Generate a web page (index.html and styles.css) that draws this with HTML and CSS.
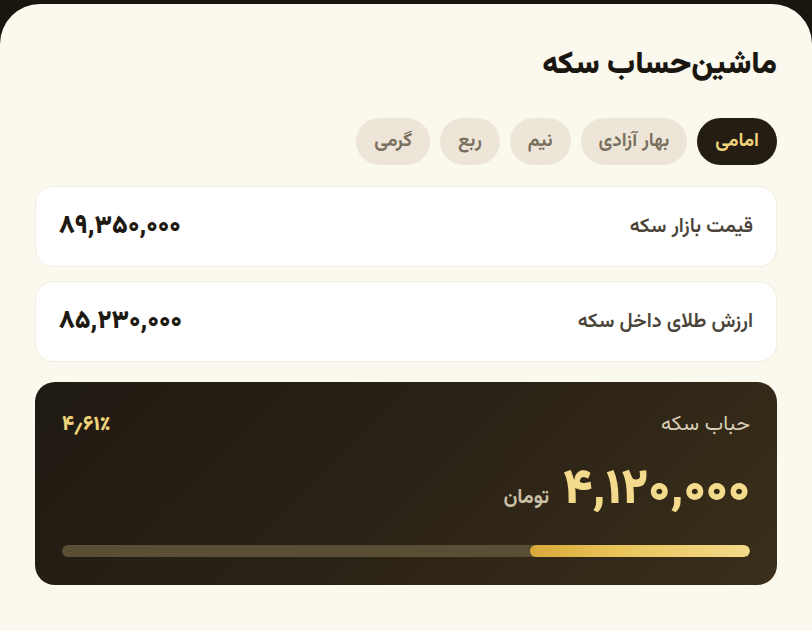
FILE: index.html
```html
<!DOCTYPE html>
<html lang="fa" dir="rtl">
<head>
<meta charset="utf-8">
<title>ماشین‌حساب سکه</title>
<link rel="stylesheet" href="styles.css">
</head>
<body>
<div class="sheet">
  <h1 class="title">ماشین‌حساب سکه</h1>
  <div class="chips">
    <span class="chip active">امامی</span>
    <span class="chip">بهار آزادی</span>
    <span class="chip">نیم</span>
    <span class="chip">ربع</span>
    <span class="chip">گرمی</span>
  </div>
  <div class="row">
    <span class="label">قیمت بازار سکه</span>
    <span class="value">۸۹,۳۵۰,۰۰۰</span>
  </div>
  <div class="row">
    <span class="label">ارزش طلای داخل سکه</span>
    <span class="value">۸۵,۲۳۰,۰۰۰</span>
  </div>
  <div class="bubble">
    <div class="bubble-head">
      <span class="bubble-label">حباب سکه</span>
      <span class="bubble-pct">۴٫۶۱٪</span>
    </div>
    <div class="bubble-amount">
      <span class="big">۴,۱۲۰,۰۰۰</span>
      <span class="unit">تومان</span>
    </div>
    <div class="track"><div class="fill" style="width:32%"></div></div>
  </div>
</div>
</body>
</html>
```
FILE: styles.css
```css
* { box-sizing: border-box; }
html, body { margin: 0; padding: 0; }
body {
  background: #1a160e;
  font-family: "Vazirmatn", "Noto Sans Arabic", "DejaVu Sans", sans-serif;
  width: 812px;
  height: 631px;
  overflow: hidden;
  padding-top: 4px;
}
.sheet {
  background: #fbf8ee;
  border-radius: 40px 40px 0 0;
  height: 627px;
  padding: 40px 35px 0 35px;
}
.title {
  margin: 0;
  font-size: 31px;
  font-weight: 900;
  color: #1a1610;
  line-height: 44px;
}
.chips {
  display: flex;
  gap: 10px;
  margin-top: 30px;
}
.chip {
  height: 47px;
  padding: 0 18px;
  border-radius: 24px;
  background: #ede6d8;
  color: #7a7060;
  font-size: 19px;
  font-weight: 700;
  display: flex;
  align-items: center;
  justify-content: center;
}
.chip.active {
  background: #231d14;
  color: #f0d27a;
}
.row {
  margin-top: 21px;
  height: 81px;
  background: #ffffff;
  border: 1px solid #f1ecdf;
  border-radius: 18px;
  display: flex;
  align-items: center;
  justify-content: space-between;
  padding: 0 23px;
}
.row + .row { margin-top: 14px; }
.label {
  font-size: 20px;
  font-weight: 600;
  color: #4a4438;
}
.value {
  font-size: 25.5px;
  font-weight: 900;
  color: #1e1a12;
}
.bubble {
  margin-top: 20px;
  height: 203px;
  border-radius: 20px;
  background: linear-gradient(135deg, #1f1a12 0%, #2a2216 50%, #3b2f1a 100%);
  padding: 26px 27px 0 27px;
}
.bubble-head {
  display: flex;
  justify-content: space-between;
  align-items: center;
}
.bubble-label {
  font-size: 21px;
  color: #d8ceb6;
}
.bubble-pct {
  font-size: 20px;
  font-weight: 900;
  color: #f0d27a;
}
.bubble-amount {
  display: flex;
  align-items: baseline;
  gap: 14px;
  margin-top: 20px;
}
.big {
  font-size: 49px;
  font-weight: 900;
  color: #f4da8c;
  line-height: 60px;
}
.unit {
  font-size: 20px;
  font-weight: 700;
  color: #c9bfa6;
}
.track {
  margin-top: 24px;
  height: 12px;
  border-radius: 6px;
  background: #5a4e34;
  overflow: hidden;
  display: flex;
}
.fill {
  height: 100%;
  border-radius: 6px;
  background: linear-gradient(to left, #f3d98a, #e9c45a 60%, #d9a93a);
}
```
